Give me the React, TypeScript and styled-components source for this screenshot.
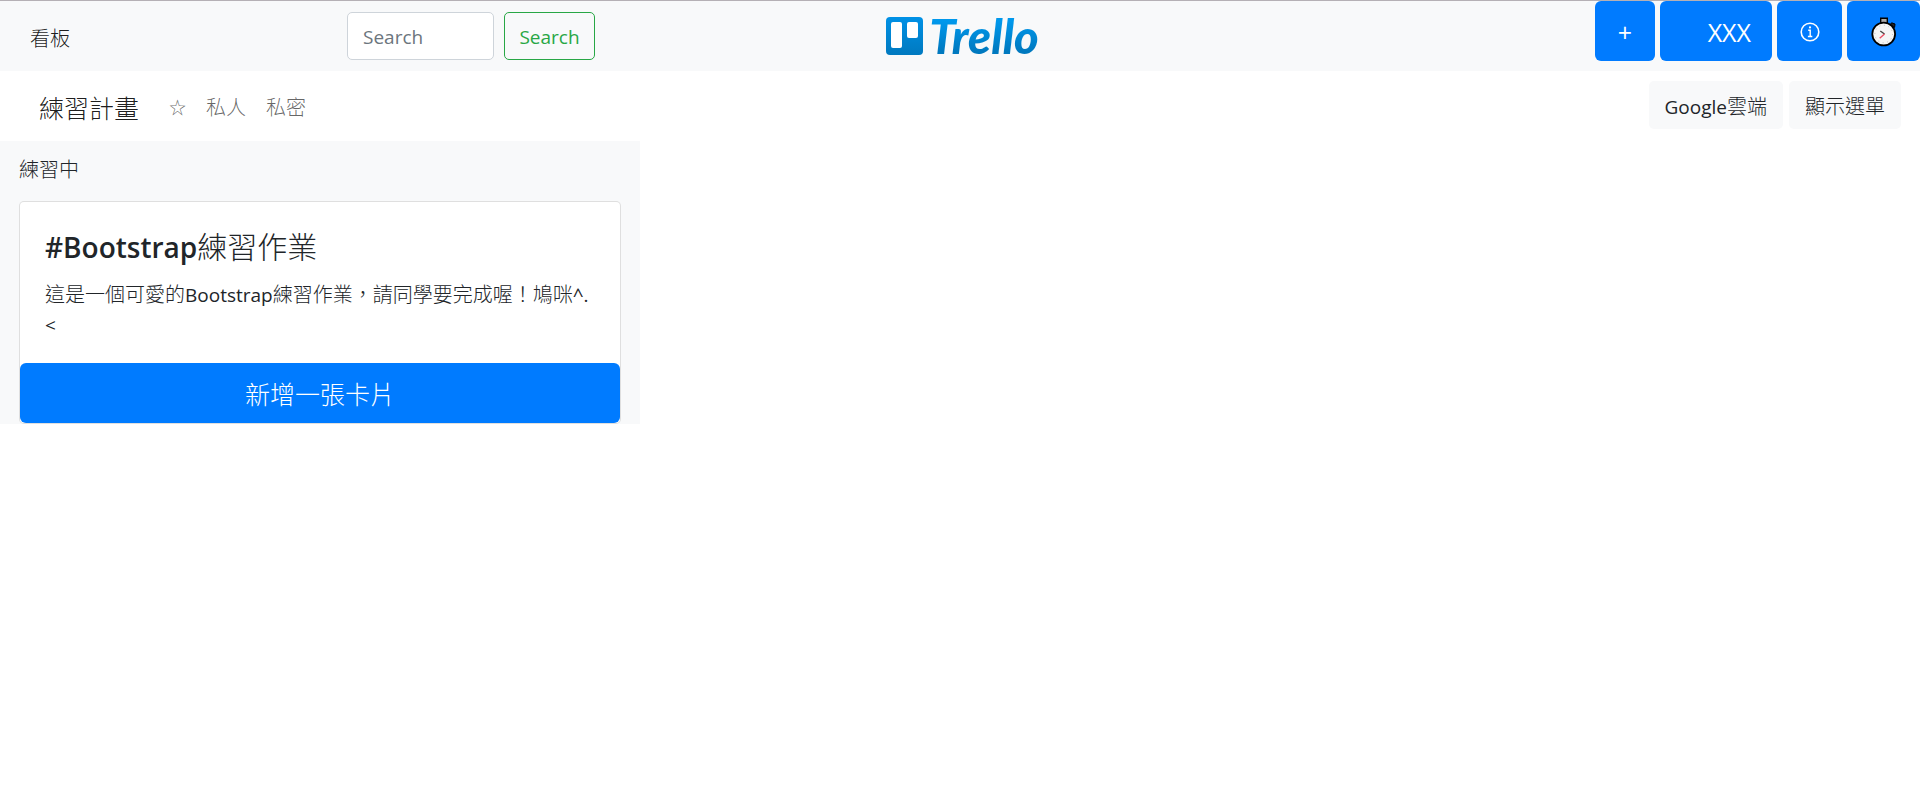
import React from "react";
import styled, { createGlobalStyle } from "styled-components";

const GlobalStyle = createGlobalStyle`
  *, *::before, *::after { box-sizing: border-box; }
  body {
    margin: 0;
    background: #fff;
    color: #212529;
    font: 300 20px/30px "Open Sans", "Noto Sans CJK TC", sans-serif;
  }
  a { color: inherit; text-decoration: none; }
  button, input { font: inherit; margin: 0; }
  button { cursor: pointer; }
  svg { display: block; flex: none; }
`;

const Latin = styled.span<{ $size?: number }>`
  font-size: ${(p) => p.$size ?? 19}px;
  font-weight: 400;
`;

const TopBar = styled.header`
  display: grid;
  grid-template-columns: repeat(3, 1fr);
  min-height: 71px;
  border-top: 1px solid #b5b0b5;
  background: #f8f9fa;
`;

const TopLeft = styled.div`
  display: flex;
  align-items: center;
  justify-content: space-between;
  padding: 0 45px 0 30px;
`;

const BoardLink = styled.a`
  padding-top: 6px;
  color: rgba(0, 0, 0, 0.9);
`;

const SearchForm = styled.form`
  display: flex;
  gap: 10px;
`;

const SearchInput = styled.input`
  width: 147px;
  height: 48px;
  padding: 2px 15px 0;
  border: 1px solid #ced4da;
  border-radius: 5px;
  background: #fff;
  color: #495057;
  font-size: 19px;
  font-weight: 400;
  &::placeholder { color: #6c757d; opacity: 1; }
`;

const SearchButton = styled.button`
  width: 91px;
  height: 48px;
  padding: 2px 0 0;
  border: 1px solid #28a745;
  border-radius: 5px;
  background: transparent;
  color: #28a745;
  font-size: 19px;
  font-weight: 400;
`;

const Logo = styled.a`
  display: flex;
  align-items: center;
  justify-content: center;
  gap: 6px;
  padding-left: 8px;
`;

const Wordmark = styled.span`
  padding-right: 3px;
  background: linear-gradient(#0098ec 20%, #0079bf 80%);
  background-clip: text;
  -webkit-background-clip: text;
  color: transparent;
  font: italic 900 47px/50px Lato, sans-serif;
`;

const Actions = styled.nav`
  display: flex;
  align-items: flex-start;
  justify-content: flex-end;
  gap: 5px;
`;

const PrimaryButton = styled.button<{ $width: string; $align?: string }>`
  display: flex;
  align-items: center;
  justify-content: ${(p) => p.$align ?? "center"};
  width: ${(p) => p.$width};
  height: 60px;
  padding: 2px 21px 0;
  border: 0;
  border-radius: 6px;
  background: #007bff;
  color: #fff;
  font-size: 25px;
`;

const BoardBar = styled.div`
  display: flex;
  align-items: center;
  justify-content: space-between;
  min-height: 70px;
  padding: 10px 19px 12px 39px;
`;

const BoardNav = styled.nav`
  display: flex;
  align-items: center;
  gap: 20px;
  padding-top: 6px;
  color: rgba(0, 0, 0, 0.6);
`;

const BoardTitle = styled.a`
  margin-right: 10px;
  color: rgba(0, 0, 0, 0.9);
  font-size: 25px;
`;

const StarLink = styled.a`
  font-size: 17px;
  font-weight: 400;
`;

const ButtonGroup = styled.div`
  display: flex;
  gap: 6px;
`;

const LightButton = styled.button`
  height: 48px;
  padding: 4px 16px 0;
  border: 0;
  border-radius: 5px;
  background: #f8f9fa;
  color: #212529;
`;

const List = styled.section`
  width: calc(100% / 3);
  padding: 14px 19px 0;
  background: #f8f9fa;
`;

const ListTitle = styled.p`
  margin: 0 0 16px;
`;

const Card = styled.article`
  overflow: hidden;
  border: 1px solid rgba(0, 0, 0, 0.125);
  border-radius: 5px;
  background: #fff;
`;

const CardBody = styled.div`
  padding: 27px 25px 23px;
`;

const CardTitle = styled.h4`
  margin: 0 0 15px;
  font-size: 30px;
  font-weight: 300;
  line-height: 36px;
  span { font-weight: 600; }
`;

const CardText = styled.p`
  margin: 0;
`;

const TrelloMark = () => (
  <svg width="37" height="38" viewBox="0 0 37 38" aria-hidden="true">
    <defs>
      <linearGradient id="mark" x1="0" y1="0" x2="0" y2="1">
        <stop offset="0" stopColor="#0091e6" />
        <stop offset="1" stopColor="#0079bf" />
      </linearGradient>
    </defs>
    <rect width="37" height="38" rx="4" fill="url(#mark)" />
    <rect x="5" y="5" width="11" height="26" rx="2" fill="#fff" />
    <rect x="21" y="5" width="11" height="16" rx="2" fill="#fff" />
  </svg>
);

const InfoIcon = () => (
  <svg width="20" height="20" viewBox="0 0 20 20" fill="none" stroke="#fff" aria-hidden="true">
    <circle cx="10" cy="10" r="8.8" strokeWidth="1.6" />
    <path d="M8.2 8.3h2v6M7.9 14.5h4.4" strokeWidth="1.4" />
    <circle cx="10" cy="5.4" r="1.1" fill="#fff" stroke="none" />
  </svg>
);

const StopwatchIcon = () => (
  <svg width="26" height="30" viewBox="0 0 26 30" aria-hidden="true">
    <path d="M19 8l1.6-2.2 3.4 1.2-.4 3.4z" fill="#222" stroke="#000" />
    <path d="M9.7 1.2h6.6v6H9.7z" fill="#aaa" stroke="#000" strokeWidth="1.4" />
    <circle cx="12.7" cy="17" r="11.4" fill="#f5f5f5" stroke="#000" strokeWidth="1.8" />
    <circle cx="12.7" cy="17" r="8.8" fill="none" stroke="#bbb" strokeWidth="1" strokeDasharray="1 3.6" />
    <path d="M9.3 14l4.2 3" stroke="#444" strokeWidth="1.4" />
    <path d="M13.5 17l-4.8 4.2" stroke="#e84a5f" strokeWidth="1.3" />
  </svg>
);

export default function App() {
  return (
    <div lang="zh-TW">
      <GlobalStyle />
      <TopBar>
        <TopLeft>
          <BoardLink href="#">看板</BoardLink>
          <SearchForm onSubmit={(e) => e.preventDefault()}>
            <SearchInput type="search" placeholder="Search" aria-label="Search" />
            <SearchButton type="submit">Search</SearchButton>
          </SearchForm>
        </TopLeft>
        <Logo href="#">
          <TrelloMark />
          <Wordmark>Trello</Wordmark>
        </Logo>
        <Actions>
          <PrimaryButton $width="60px"><Latin $size={25}>+</Latin></PrimaryButton>
          <PrimaryButton $width="112px" $align="flex-end"><Latin $size={25}>XXX</Latin></PrimaryButton>
          <PrimaryButton $width="65px" aria-label="資訊"><InfoIcon /></PrimaryButton>
          <PrimaryButton $width="73px" aria-label="計時"><StopwatchIcon /></PrimaryButton>
        </Actions>
      </TopBar>
      <BoardBar>
        <BoardNav>
          <BoardTitle href="#">練習計畫</BoardTitle>
          <StarLink href="#">☆</StarLink>
          <a href="#">私人</a>
          <a href="#">私密</a>
        </BoardNav>
        <ButtonGroup>
          <LightButton><Latin>Google</Latin>雲端</LightButton>
          <LightButton>顯示選單</LightButton>
        </ButtonGroup>
      </BoardBar>
      <List>
        <ListTitle>練習中</ListTitle>
        <Card>
          <CardBody>
            <CardTitle><Latin $size={28}>#Bootstrap</Latin>練習作業</CardTitle>
            <CardText>
              這是一個可愛的<Latin>Bootstrap</Latin>練習作業，請同學要完成喔！鳩咪<Latin>^.<wbr />&lt;</Latin>
            </CardText>
          </CardBody>
          <PrimaryButton $width="100%">新增一張卡片</PrimaryButton>
        </Card>
      </List>
    </div>
  );
}
